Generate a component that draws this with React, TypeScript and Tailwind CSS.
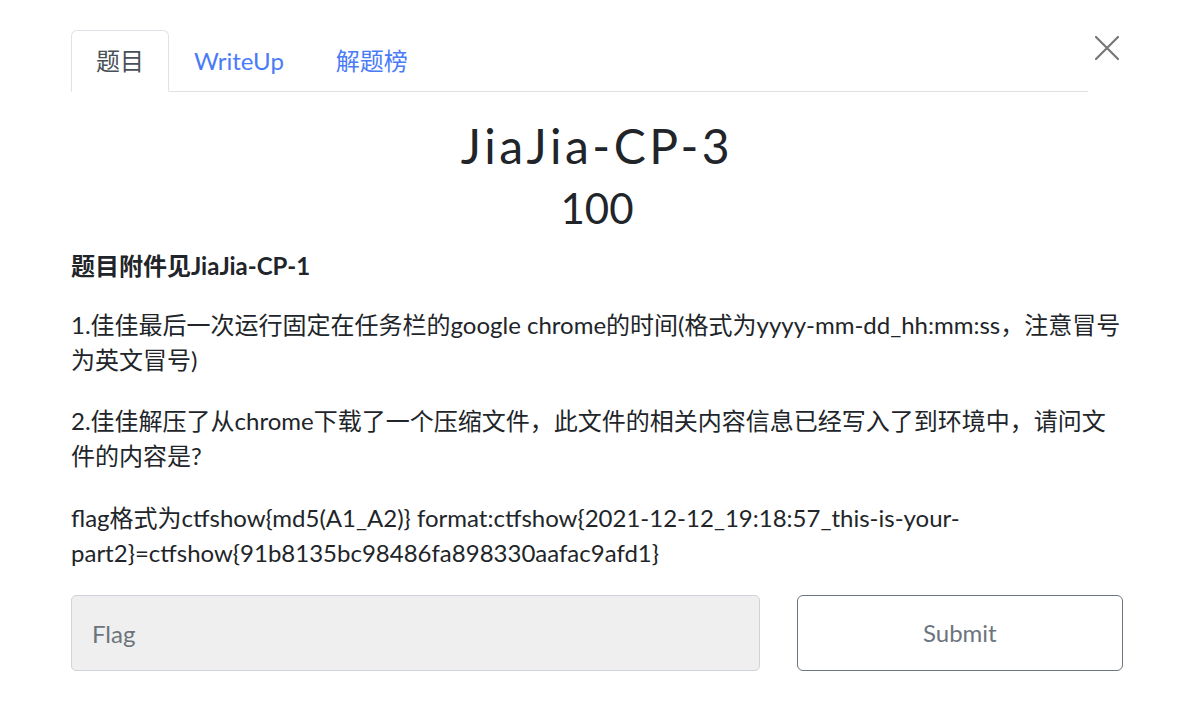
export default function App() {
  const font = { fontFamily: 'Lato, "Noto Sans CJK SC", sans-serif' };
  return (
    <div className="min-h-[704px] w-[1195px] bg-white text-[#212529]" style={font}>
      <div className="pl-[71px] pr-[72px] pt-[30px]">
        <div className="flex items-start">
          <ul className="flex w-[1017px] border-b border-[#dee2e6] text-[24px] leading-[36px]">
            <li className="-mb-px rounded-t-[6px] border border-[#dee2e6] border-b-white bg-white px-6 py-3 text-[#495057]">
              题目
            </li>
            <li className="-mb-px border border-transparent px-6 py-3 text-[#4a7bf7]">WriteUp</li>
            <li className="-mb-px ml-[2px] border border-transparent px-6 py-3 text-[#4a7bf7]">解题榜</li>
          </ul>
          <button className="ml-[7px] mt-[6px] text-[#777]" aria-label="Close">
            <svg width="24" height="24" viewBox="0 0 24 24">
              <path d="M1 1 L23 23 M23 1 L1 23" stroke="currentColor" strokeWidth="2.2" strokeLinecap="round" />
            </svg>
          </button>
        </div>

        <div className="mt-[25px] text-center">
          <h3 className="text-[48px] font-normal leading-[58px] tracking-[3.5px]">JiaJia-CP-3</h3>
          <h4 className="mt-[7px] text-[42px] font-normal leading-[52px]">100</h4>
        </div>

        <div className="mt-[14px] text-[24px] leading-[35px]">
          <p className="mb-[24px] font-bold">
            题目附件见<span>JiaJia-CP-1</span>
          </p>
          <p className="mb-[26px]">
            1.佳佳最后一次运行固定在任务栏的google chrome的时间(格式为yyyy-mm-dd_hh:mm:ss，注意冒号为英文冒号)
          </p>
          <p className="mb-[27px]">
            2.佳佳解压了从chrome下载了一个压缩文件，此文件的相关内容信息已经写入了到环境中，请问文件的内容是?
          </p>
          <p>
            flag格式为ctfshow{'{'}md5(A1_A2){'}'} format:ctfshow{'{'}2021-12-12_19:18:57_this-is-your-part2{'}'}=ctfshow{'{'}91b8135bc98486fa898330aafac9afd1{'}'}
          </p>
        </div>

        <div className="mt-[25px] flex gap-[37px]">
          <input
            placeholder="Flag"
            className="h-[76px] w-[690px] rounded-[5px] border border-[#ced4da] bg-[#efefef] px-[20px] text-[24px] placeholder:text-[#6c757d]"
            style={font}
          />
          <button className="h-[76px] w-[327px] rounded-[6px] border border-[#6c757d] text-[24px] text-[#6c757d]" style={font}>
            Submit
          </button>
        </div>
      </div>
    </div>
  );
}
